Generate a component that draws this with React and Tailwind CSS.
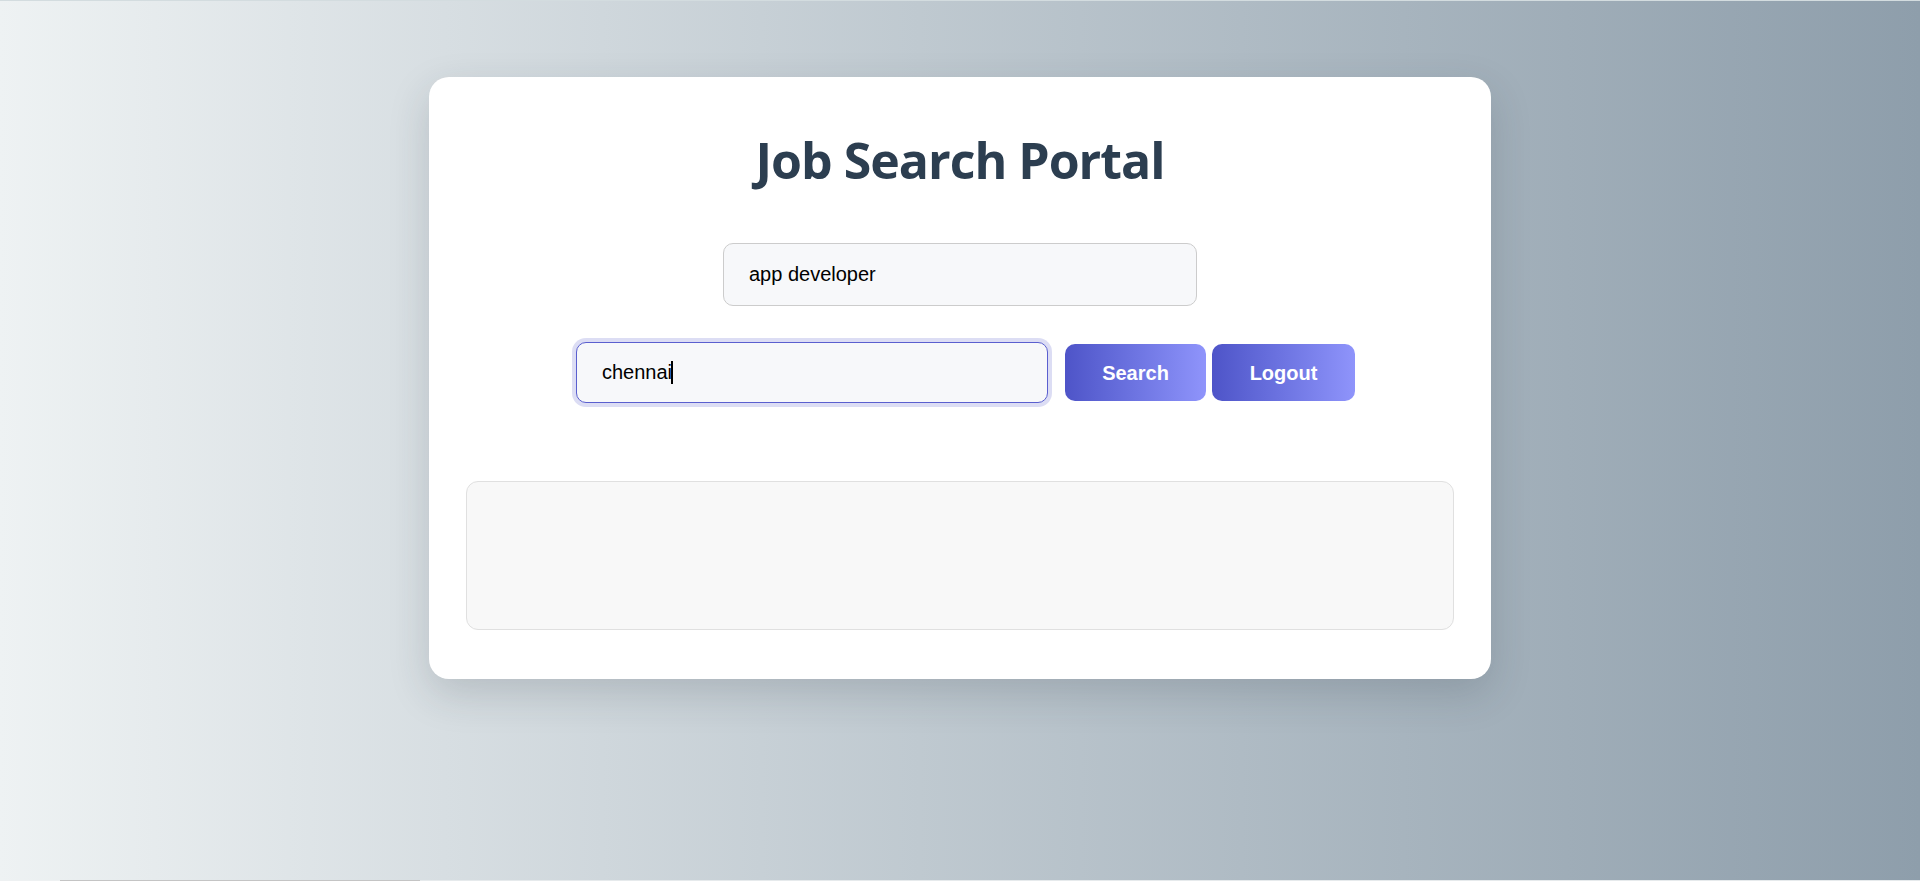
import { useState } from "react";

const App = () => {
  const [role, setRole] = useState("app developer");

  const [city, setCity] = useState("chennai");

  return (
    <div className="h-[881px] flex flex-col bg-gradient-to-r from-[#eef2f3] to-[#8e9eab] overflow-hidden">

      {/* TOP EDGE */}

      <div className="h-px bg-[#d3dcdf]" />

      {/* PAGE */}

      <div className="flex-1 flex justify-center pt-[76px]">

        <div className="w-[1062px] h-fit bg-white rounded-[20px] px-[37px] pt-[58px] pb-[49px] shadow-[0_15px_40px_rgba(40,50,60,0.18)]">

          {/* TITLE */}

          <h1 className="text-center text-[50px] leading-[50px] tracking-[-1px] font-bold text-[#2c3e50] font-['Open_Sans',sans-serif]">
            Job Search Portal
          </h1>

          {/* ROLE */}

          <div className="flex justify-center mt-[58px]">

            <input
              type="text"
              value={role}
              onChange={(e) => setRole(e.target.value)}
              className="w-[474px] h-[63px] px-[25px] bg-[#f7f8fa] border border-[#cccccc] rounded-[10px] text-[20px] text-black outline-none font-['Liberation_Sans',Arial,sans-serif]"
            />

          </div>

          {/* LOCATION + ACTIONS */}

          <div className="flex justify-center items-center mt-[36px] pl-[11px]">

            <div className="relative">

              <input
                type="text"
                value={city}
                onChange={(e) => setCity(e.target.value)}
                className="w-[472px] h-[61px] px-[25px] bg-[#f7f8fa] border border-[#5a5fcf] rounded-[10px] text-[20px] text-black outline-none caret-transparent shadow-[0_0_0_4px_rgba(78,84,200,0.2)] font-['Liberation_Sans',Arial,sans-serif]"
              />

              {/* caret */}
              <span className="absolute left-[95px] top-[19px] w-[2px] h-[23px] bg-black pointer-events-none" />

            </div>

            <button className="ml-[17px] w-[141px] h-[57px] rounded-[10px] bg-gradient-to-r from-[#4e54c8] to-[#8f94fb] text-white text-[20px] font-bold font-['Liberation_Sans',Arial,sans-serif]">
              Search
            </button>

            <button className="ml-[6px] w-[143px] h-[57px] rounded-[10px] bg-gradient-to-r from-[#4e54c8] to-[#8f94fb] text-white text-[20px] font-bold font-['Liberation_Sans',Arial,sans-serif]">
              Logout
            </button>

          </div>

          {/* RESULTS */}

          <div className="mt-[78px] h-[149px] bg-[#f8f8f8] border border-[#e0e0e0] rounded-[12px]" />

        </div>

      </div>

      {/* BOTTOM EDGE */}

      <div className="h-px flex">
        <div className="w-[60px] bg-[#eef1f2]" />
        <div className="w-[360px] bg-[#c4c4c4]" />
        <div className="flex-1 bg-[#e6eaec]" />
      </div>

    </div>
  );
};

export default App;
